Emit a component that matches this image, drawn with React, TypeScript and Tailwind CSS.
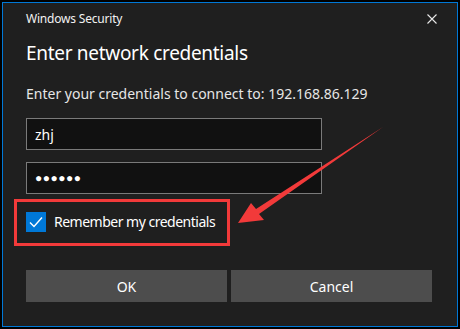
export default function App() {
  return (
    <div className="relative h-[329px] w-[460px] bg-black p-[2px] font-['Noto_Sans',sans-serif] text-white">
      <div className="flex h-[325px] w-[456px] flex-col border border-[#0078d7] bg-[#1f1f1f] pl-[23px] pr-[23px]">
        <div className="flex items-start justify-between pt-[8px]">
          <span className="text-[12px] leading-[16px] tracking-[-0.2px] text-[#f2f2f2]">Windows Security</span>
          <svg width="10" height="10" viewBox="0 0 10 10" className="mr-[-3px] mt-[3px]">
            <path d="M0.5 0.5 L9.5 9.5 M9.5 0.5 L0.5 9.5" stroke="#e8e8e8" strokeWidth="1.1" />
          </svg>
        </div>
        <h1 className="mt-[12px] text-[19px] leading-[28px] tracking-[-0.3px] text-white">Enter network credentials</h1>

        <p className="mt-[17px] text-[14px] leading-[20px] text-[#e6e6e6]">
          Enter your credentials to connect to: 192.168.86.129
        </p>

        <div className="mt-[14px] flex h-[32px] w-[296px] items-center border border-[#7a7a7a] bg-[#111111] px-[8px] text-[14px] text-white">
          zhj
        </div>
        <div className="mt-[12px] flex h-[32px] w-[296px] items-center border border-[#7a7a7a] bg-[#111111] px-[8px] text-[12px] tracking-[0.5px] text-white">
          ●●●●●●
        </div>

        <label className="mt-[17px] flex items-center gap-[8px] text-[14px] tracking-[-0.5px] text-white">
          <span className="flex h-[20px] w-[20px] items-center justify-center bg-[#0078d7]">
            <svg width="14" height="12" viewBox="0 0 14 12">
              <path d="M1 6.5 L5 10.5 L13 1.5" fill="none" stroke="white" strokeWidth="1.4" />
            </svg>
          </span>
          Remember my credentials
        </label>

        <div className="mt-auto mb-[24px] flex gap-[4px]">
          <button className="h-[32px] w-[201px] bg-[#4d4d4d] text-[14px] text-white">OK</button>
          <button className="h-[32px] w-[201px] bg-[#4d4d4d] text-[14px] text-white">Cancel</button>
        </div>
      </div>

      {/* annotation overlay */}
      <div className="absolute left-[14px] top-[199px] h-[47px] w-[216px] border-[3px] border-[#f23a3a]" />
      <svg className="absolute left-0 top-0" width="460" height="329" viewBox="0 0 460 329">
        <polygon
          points="238,223 251,203 256,209 383,127 259,214 264,220"
          fill="#f23a3a"
        />
      </svg>
    </div>
  );
}
